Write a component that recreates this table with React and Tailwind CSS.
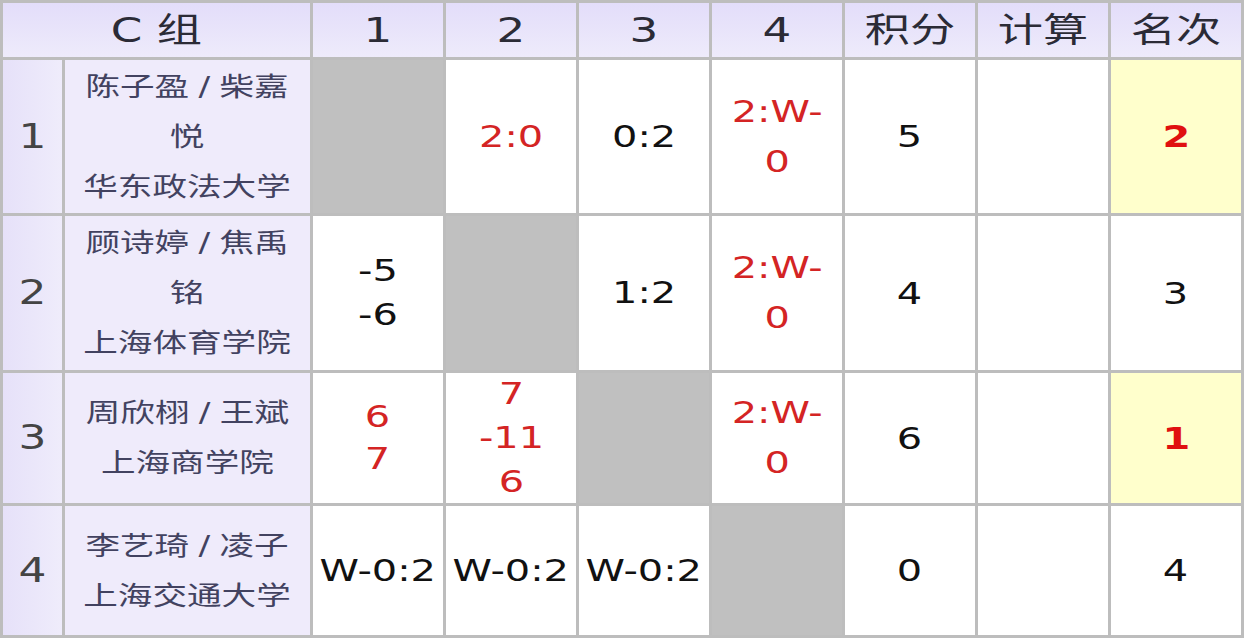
const cjk = "font-['DejaVu_Sans','Noto_Sans_CJK_SC',sans-serif]";

const players = [
  { no: "1", name: [["陈子盈", "柴嘉"], "悦"], school: "华东政法大学" },
  { no: "2", name: [["顾诗婷", "焦禹"], "铭"], school: "上海体育学院" },
  { no: "3", name: [["周欣栩", "王斌"]], school: "上海商学院" },
  { no: "4", name: [["李艺琦", "凌子"]], school: "上海交通大学" },
];

// each score cell: lines, red?, leading class
const scores = [
  [null, { t: ["2:0"], red: true }, { t: ["0:2"] }, { t: ["2:W-", "0"], red: true, lh: "leading-[50px]" }],
  [{ t: ["-5", "-6"] }, null, { t: ["1:2"] }, { t: ["2:W-", "0"], red: true, lh: "leading-[50px]" }],
  [{ t: ["6", "7"], red: true, lh: "leading-[42px]" }, { t: ["7", "-11", "6"], red: true }, null, { t: ["2:W-", "0"], red: true, lh: "leading-[50px]" }],
  [{ t: ["W-0:2"] }, { t: ["W-0:2"] }, { t: ["W-0:2"] }, null],
];

const points = ["5", "4", "6", "0"];
const ranks = [
  { r: "2", top: true },
  { r: "3" },
  { r: "1", top: true },
  { r: "4" },
];

function Stretch({ children, className = "" }) {
  return <span className={`inline-block scale-x-[1.33] ${className}`}>{children}</span>;
}

function Lines({ lines }) {
  return lines.map((l, i) => (
    <span key={i} className="block">
      {Array.isArray(l) ? (
        <>
          {l[0]}
          <span className="mx-[7px]">/</span>
          {l[1]}
        </>
      ) : (
        l
      )}
    </span>
  ));
}

function HeadCell({ children, span }) {
  return (
    <div
      className={`flex items-center justify-center bg-gradient-to-b from-[#e3ddfa] to-[#eeebfb] text-[34px] text-[#2b2b36] ${span ? "col-span-2" : ""}`}
    >
      <Stretch>{children}</Stretch>
    </div>
  );
}

function ScoreCell({ s }) {
  if (!s) return <div className="bg-[#c0c0c0]" />;
  return (
    <div className="flex items-center justify-center bg-white">
      <Stretch className={`text-center text-[30px] ${s.lh || "leading-[44px]"} ${s.red ? "text-[#d42424]" : "text-[#111]"}`}>
        <Lines lines={s.t} />
      </Stretch>
    </div>
  );
}

export default function App() {
  return (
    <div className={`min-h-screen bg-white ${cjk}`}>
      <div className="inline-grid grid-cols-[59px_245px_130px_130px_130px_130px_130px_130px_130px] grid-rows-[54px_153px_154px_130px_129px] gap-[3px] bg-[#bdbdbd] p-[3px]">
        <HeadCell span>C 组</HeadCell>
        <HeadCell>1</HeadCell>
        <HeadCell>2</HeadCell>
        <HeadCell>3</HeadCell>
        <HeadCell>4</HeadCell>
        <HeadCell>积分</HeadCell>
        <HeadCell>计算</HeadCell>
        <HeadCell>名次</HeadCell>

        {players.map((p, i) => (
          <div key={p.no} className="contents">
            <div className="flex items-center justify-center bg-gradient-to-r from-[#e6e1f9] to-[#efecfb] text-[33px] text-[#444]">
              <Stretch>{p.no}</Stretch>
            </div>
            <div className="flex items-center justify-center bg-[#efebfb]">
              <Stretch className="text-center text-[26px] leading-[50px] text-[#424260]">
                <Lines lines={[...p.name, p.school]} />
              </Stretch>
            </div>
            {scores[i].map((s, j) => (
              <ScoreCell key={j} s={s} />
            ))}
            <div className="flex items-center justify-center bg-white text-[30px] text-[#111]">
              <Stretch>{points[i]}</Stretch>
            </div>
            <div className="bg-white" />
            <div
              className={`flex items-center justify-center text-[30px] ${ranks[i].top ? "bg-[#ffffcc] font-bold text-[#e01010]" : "bg-white text-[#111]"}`}
            >
              <Stretch>{ranks[i].r}</Stretch>
            </div>
          </div>
        ))}
      </div>
    </div>
  );
}
